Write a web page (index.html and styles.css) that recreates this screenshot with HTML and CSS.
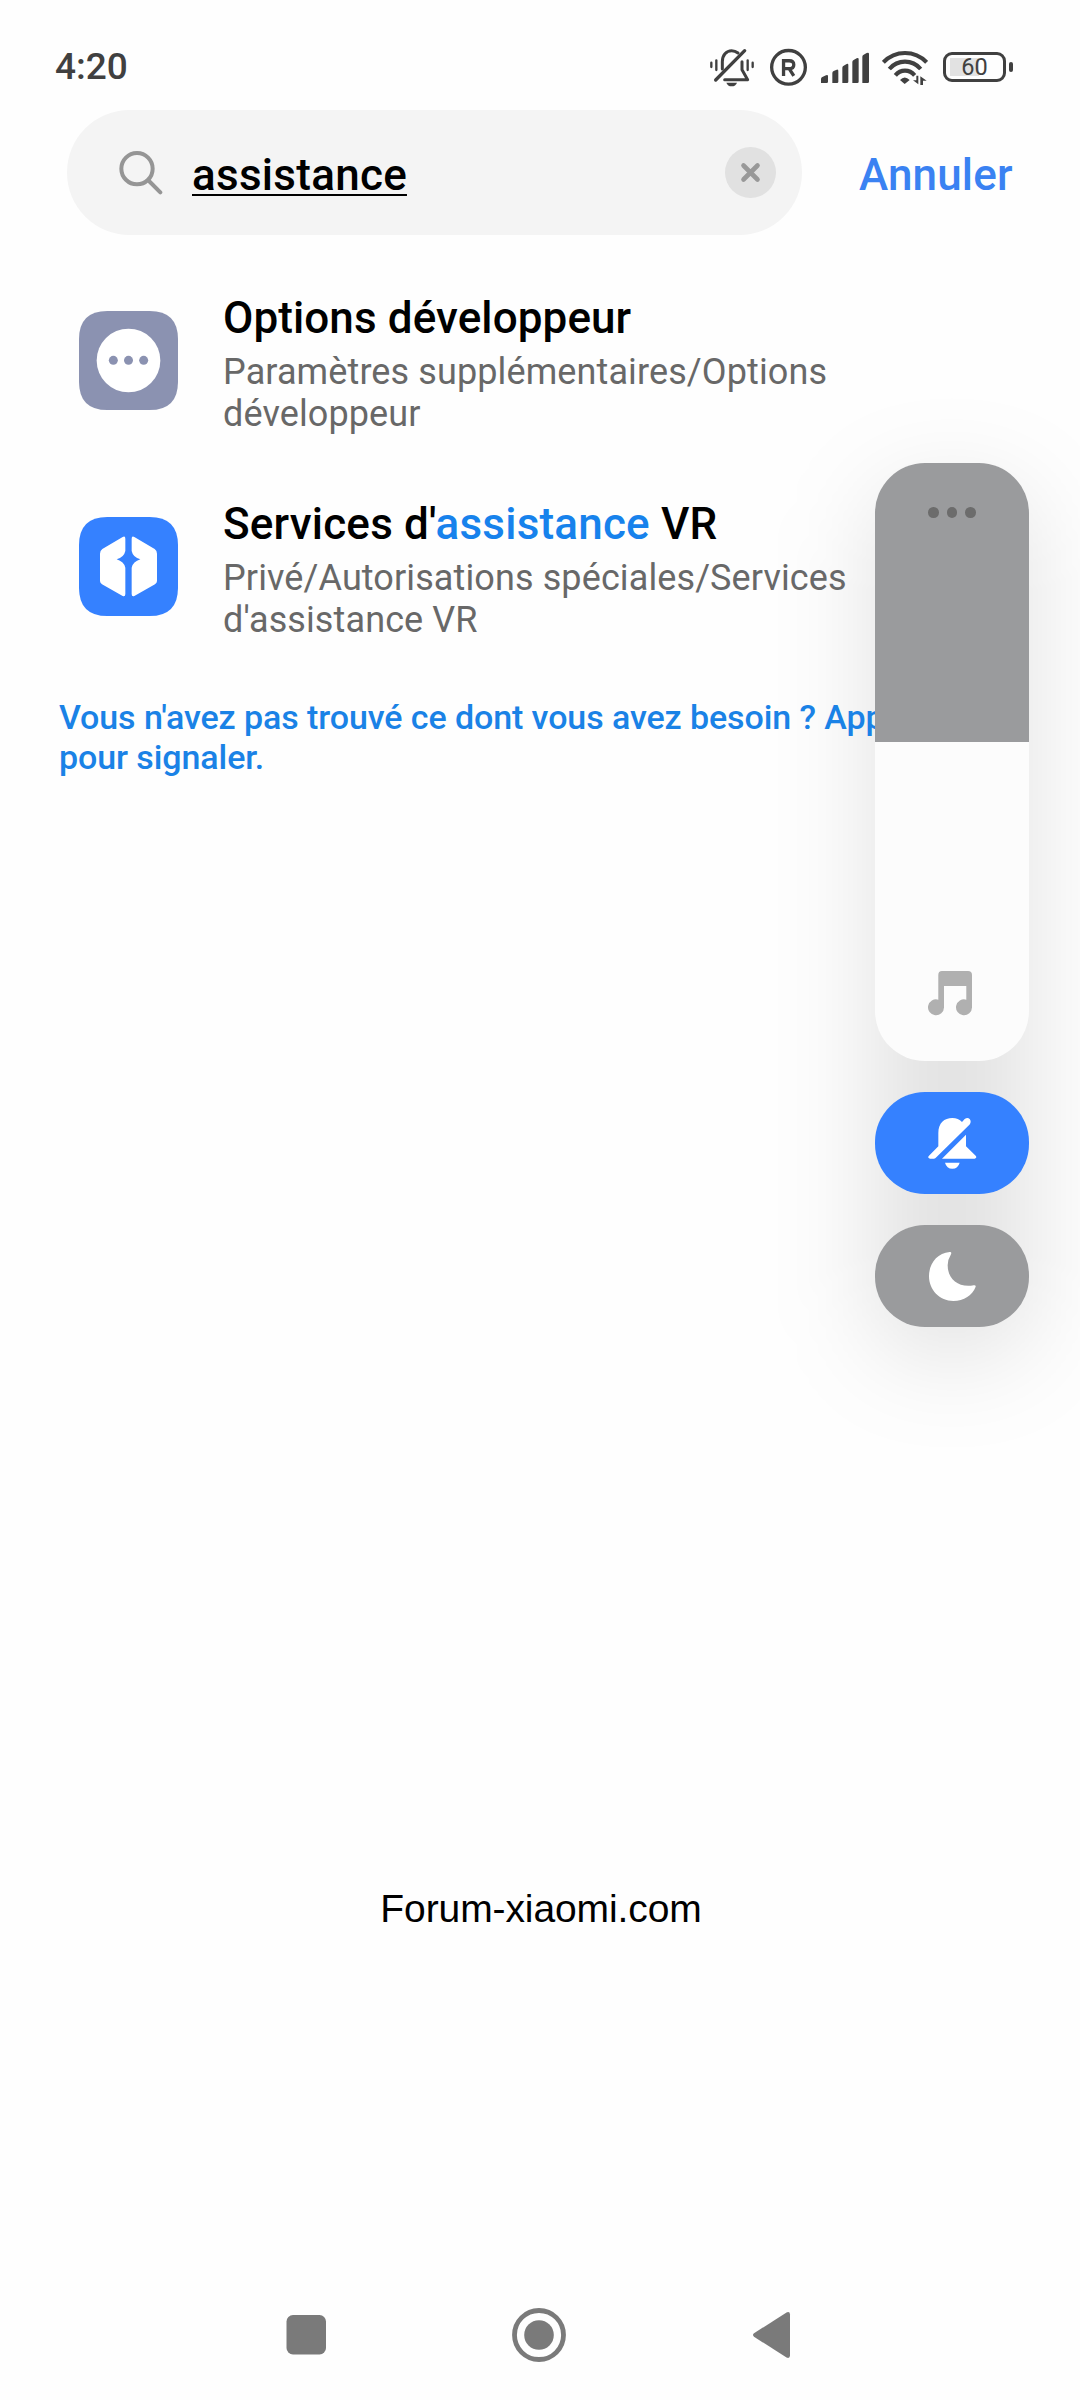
FILE: index.html
```html
<!DOCTYPE html>
<html lang="fr">
<head>
<meta charset="utf-8">
<title>Recherche</title>
<link rel="stylesheet" href="styles.css">
</head>
<body>
<div class="screen">
  <header class="status">
    <span class="clock">4:20</span>
    <div class="status-icons">
      <svg class="st-bell" viewBox="60 48 132 120" fill="none" stroke="#404040" stroke-linecap="round" stroke-width="9">
        <path d="M97 114V92C97 72 109 59 125 59C133 59 139 62 144 66"/>
        <path d="M156 92V116L173 146H104" stroke-linejoin="round"/>
        <path d="M77 147L164 59" stroke-width="10"/>
        <path d="M109 155H141Q137 166 125 166Q113 166 109 155Z" fill="#404040" stroke="none"/>
        <path d="M64 95V108M79 88V117M173 88V117M188 95V108" stroke-width="7"/>
      </svg>
      <svg class="st-reg" viewBox="240 48 112 120" fill="none" stroke="#404040">
        <circle cx="296" cy="109" r="51" stroke-width="10"/>
        <path d="M281 135V89H298Q312 89 312 101T298 113H281M298 113L312 135" stroke-width="10"/>
      </svg>
      <svg class="st-signal" viewBox="393 48 144 120" fill="#404040">
        <path d="M393 156V144Q393 140 397 138L408 133Q414 130 414 136V152Q414 156 410 156Z"/>
        <path d="M427 156V126Q427 122 431 120L440 116Q445 114 445 120V152Q445 156 441 156Z"/>
        <path d="M457 156V110Q457 106 461 104L470 99Q475 97 475 102V152Q475 156 471 156Z"/>
        <path d="M487 156V93Q487 89 491 87L500 82Q506 79 506 85V152Q506 156 502 156Z"/>
        <path d="M517 156V77Q517 73 521 71L530 66Q537 63 537 69V152Q537 156 533 156Z"/>
      </svg>
      <svg class="st-wifi" viewBox="576 48 138 120" fill="none" stroke="#404040" stroke-width="12.500">
        <path d="M580 94Q607 66 645 66T710 94"/>
        <path d="M598 114Q617 92 645 92T692 114"/>
        <path d="M616 133Q628 119 645 119T674 133"/>
        <path d="M630 147Q644 132 659 147L644 159Z" fill="#404040" stroke="none"/>
        <path d="M685 134V160L669 148H679V134ZM691 162V136L710 149H699V162Z" fill="#404040" stroke="none"/>
      </svg>
      <div class="battery"><span>60</span></div>
    </div>
  </header>

  <div class="search-row">
    <div class="search">
      <svg class="glass" viewBox="238 362 132 132" fill="none" stroke="#959595" stroke-width="12" stroke-linecap="round">
        <circle cx="292" cy="415" r="47"/><path d="M328 452L362 486"/>
      </svg>
      <span class="query">assistance</span>
      <svg class="clear" viewBox="0 0 51 51"><circle cx="25.5" cy="25.5" r="25.5" fill="#e1e1e1"/><path d="M18.500 18.500L32.500 32.500M32.500 18.500L18.500 32.500" stroke="#989898" stroke-width="4.600" stroke-linecap="round"/></svg>
    </div>
    <span class="cancel">Annuler</span>
  </div>

  <main class="results">
    <div class="result">
      <svg class="app" viewBox="57 93 297 297">
        <path d="M57 178Q57 93 142 93H269Q354 93 354 178V305Q354 390 269 390H142Q57 390 57 305Z" fill="#8b92b1"/>
        <circle cx="205.500" cy="241.500" r="95.500" fill="#fff"/>
        <g fill="#8b92b1"><circle cx="160" cy="241" r="13.500"/><circle cx="205.500" cy="241" r="13.500"/><circle cx="251" cy="241" r="13.500"/></g>
      </svg>
      <div class="info">
        <div class="title">Options développeur</div>
        <div class="path">Paramètres supplémentaires/Options<br>développeur</div>
      </div>
    </div>
    <div class="result">
      <svg class="app" viewBox="57 711 297 297">
        <path d="M57 796Q57 711 142 711H269Q354 711 354 796V923Q354 1008 269 1008H142Q57 1008 57 923Z" fill="#3581ff"/>
        <path d="M188 771Q196 767 196 776V813Q192 832 170 838Q192 845 196 863V942Q196 951 188 948L126 913Q120 909 120 903V821Q120 812 127 807Z" fill="#fff"/>
        <path d="M223 771Q215 767 215 776V813Q219 832 241 838Q219 845 215 863V942Q215 951 223 948L285 913Q291 909 291 903V821Q291 812 284 807Z" fill="#fff"/>
      </svg>
      <div class="info">
        <div class="title match">Services d'<mark>assistance</mark> VR</div>
        <div class="path">Privé/Autorisations spéciales/Services<br>d'assistance VR</div>
      </div>
    </div>
    <p class="report">Vous n'avez pas trouvé ce dont vous avez besoin ? Appuyez<br>pour signaler.</p>
  </main>

  <p class="credit">Forum-xiaomi.com</p>

  <aside class="volume">
    <div class="slider">
      <div class="level"><i></i><i></i><i></i></div>
      <svg class="note" viewBox="0 0 44 45" fill="#b0b0b0"><path d="M10.300 28V4Q10.300 0 14 0H40Q44 0 44 4V36.500A8 8 0 1 1 38.300 28.700V15H16V36.500A8 8 0 1 1 10.300 28.700Z"/></svg>
    </div>
    <div class="pill mute">
      <svg class="glyph" viewBox="0 0 49 51"><g transform="scale(.33333 .35714) translate(-443 -608)" fill="#fff">
        <path d="M446 714L474 687V650C474 622 492 608 516 608Q534 608 545 619L553 611Q562 605 568 611Q574 618 568 626L468 718Q465 722 461 722H449Q440 720 446 714Z"/>
        <path d="M485 722L557 655V687L586 714Q591 720 583 722ZM494 733H538Q533 750 516 750T494 733Z"/>
      </g></svg>
    </div>
    <div class="pill dnd">
      <svg class="glyph" viewBox="0 0 49 51"><g transform="scale(.33333 .35714) translate(-443 -982)" fill="#fff">
        <path d="M508 985C470 988 446 1018 446 1053C446 1091 478 1122 519 1122C550 1122 577 1106 586 1082Q587 1077 580 1078C535 1086 502 1061 502 1022Q502 1006 512 991Q515 984 508 985Z"/>
      </g></svg>
    </div>
  </aside>

  <nav class="navbar">
    <svg viewBox="0 0 56 56" fill="#7a7a7a"><rect x="8.500" y="8" width="39.500" height="39.500" rx="6.500"/></svg>
    <svg viewBox="0 0 56 56"><circle cx="28" cy="28" r="24.500" fill="none" stroke="#7a7a7a" stroke-width="4.800"/><circle cx="28" cy="28" r="14.800" fill="#7a7a7a"/></svg>
    <svg viewBox="0 0 56 56" fill="#7a7a7a"><path d="M10 26.300L42.500 5.400Q46 4.200 46 7.500V48.500Q46 51.800 42.500 50.600L10 29.700Q8 28 10 26.300Z"/></svg>
  </nav>
</div>
</body>
</html>
```
FILE: styles.css
```css
* { box-sizing: border-box; }
body { margin: 0; background: #fefefe; font-family: Roboto, "Liberation Sans", sans-serif; }
svg { display: block; flex: none; }
p { margin: 0; }
.screen { position: relative; width: 1080px; height: 2400px; overflow: hidden; display: flex; flex-direction: column; }

.status { height: 110px; padding: 23px 67px 0 55px; display: flex; justify-content: space-between; align-items: center; color: #404040; }
.clock { padding-top: 1px; font-size: 37px; font-weight: 500; line-height: 44px; }
.status-icons { display: flex; align-items: center; }
.st-bell { width: 44px; height: 40px; margin-right: 16px; }
.st-reg { width: 37px; height: 40px; margin-right: 14px; }
.st-signal { width: 48px; height: 40px; margin-right: 13px; }
.st-wifi { width: 46px; height: 40px; margin-right: 15px; }
.battery { position: relative; width: 63px; height: 30px; margin-right: 7px; border: 3.500px solid #404040; border-radius: 9px; background: linear-gradient(#e2e2e2, #e2e2e2) 4px 3px / 29px 18px no-repeat; font-size: 23.500px; line-height: 25px; text-align: center; }
.battery::after { content: ""; position: absolute; right: -10px; top: 7px; width: 4px; height: 10px; border-radius: 2px; background: #404040; }

.search-row { display: flex; align-items: center; height: 125px; padding-left: 67px; }
.search { width: 735px; height: 125px; border-radius: 63px; background: #f4f4f4; display: flex; align-items: center; padding: 0 26px 0 52px; }
.glass { width: 44px; height: 44px; }
.query { margin: 5px auto 0 29px; font-size: 44px; font-weight: 500; line-height: 52px; letter-spacing: .270px; text-decoration: underline; text-decoration-thickness: 2px; text-underline-offset: 4px; text-decoration-skip-ink: none; }
.clear { width: 51px; height: 51px; }
.cancel { margin: 4px 0 0 57px; font-size: 44px; font-weight: 500; letter-spacing: .150px; color: #3a82f2; }

.results { height: 727px; padding-top: 57px; }
.result { display: flex; height: 206px; padding-left: 79px; }
.app { width: 99px; height: 99px; margin: 19px 45px 0 0; }
.title { font-size: 44px; line-height: 52px; font-weight: 500; letter-spacing: .100px; color: #000; }
.title.match { letter-spacing: .200px; }
.title mark { background: none; color: #1782ec; }
.path { margin-top: 7px; font-size: 36px; line-height: 42px; letter-spacing: .110px; color: #686868; }
.report { margin-top: -7px; padding-left: 59px; font-size: 34px; line-height: 40px; font-weight: 500; letter-spacing: -.090px; color: #1a82e6; white-space: nowrap; }

.credit { margin-top: 924px; padding-left: 2px; text-align: center; font-family: "Liberation Sans", sans-serif; font-size: 39px; line-height: 46px; letter-spacing: -.100px; color: #000; }

.volume { position: absolute; left: 875px; top: 463px; width: 154px; display: flex; flex-direction: column; gap: 31px; }
.volume::before { content: ""; position: absolute; inset: 28px 0 -28px; z-index: -1; border-radius: 50px; background: rgba(0, 0, 0, .115); filter: blur(50px); }
.slider { height: 598px; border-radius: 50px; overflow: hidden; background: #fcfcfc; display: flex; flex-direction: column; align-items: center; justify-content: space-between; padding-bottom: 45px; }
.level { width: 154px; height: 279px; background: #9a9b9d; display: flex; justify-content: center; gap: 8px; padding-top: 44px; }
.level i { width: 10.500px; height: 10.500px; border-radius: 50%; background: #6c6c6c; }
.note { width: 44px; height: 45px; margin-right: 4px; }
.pill { height: 102px; border-radius: 50px; display: flex; align-items: center; justify-content: center; }
.mute { background: #3581ff; }
.dnd { background: #9a9b9d; }
.glyph { width: 49px; height: 51px; }

.navbar { position: absolute; left: 0; bottom: 37px; width: 1078px; display: flex; justify-content: center; gap: 177px; }
.navbar svg { width: 56px; height: 56px; }
```
